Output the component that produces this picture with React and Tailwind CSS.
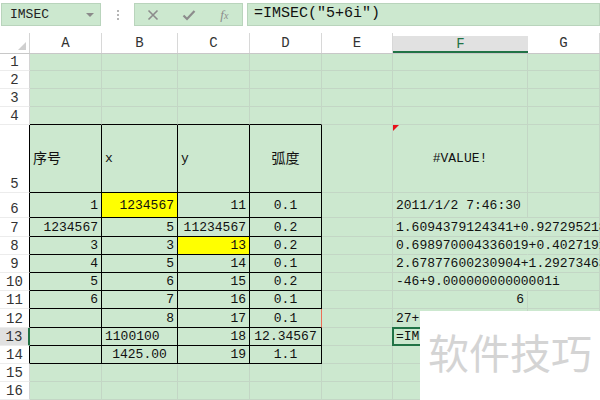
import React from "react";

const MONO = { fontFamily: '"Liberation Mono", "Noto Sans CJK SC", monospace' };

const cols = ["A", "B", "C", "D", "E", "F", "G"];
const widths = ["w-[72px]", "w-[76px]", "w-[72px]", "w-[72px]", "w-[71px]", "w-[135px]", "w-[72px]"];

const rowHeights = {
  1: "h-[17px]", 2: "h-[18px]", 3: "h-[18px]", 4: "h-[18px]", 5: "h-[68px]", 6: "h-[25px]",
  7: "h-[19px]", 8: "h-[18px]", 9: "h-[18px]", 10: "h-[18px]", 11: "h-[18px]", 12: "h-[19px]",
  13: "h-[18px]", 14: "h-[18px]", 15: "h-[18px]", 16: "h-[18px]",
};

// [text, align]
const data = {
  5: { A: ["序号", "l"], B: ["x", "l"], C: ["y", "l"], D: ["弧度", "c"], F: ["#VALUE!", "c"] },
  6: { A: ["1", "r"], B: ["1234567", "r"], C: ["11", "r"], D: ["0.1", "c"], F: ["2011/1/2 7:46:30", "l"] },
  7: { A: ["1234567", "r"], B: ["5", "r"], C: ["11234567", "r"], D: ["0.2", "c"], F: ["1.6094379124341+0.927295218001612i", "l"] },
  8: { A: ["3", "r"], B: ["3", "r"], C: ["13", "r"], D: ["0.2", "c"], F: ["0.698970004336019+0.402719196273373i", "l"] },
  9: { A: ["4", "r"], B: ["5", "r"], C: ["14", "r"], D: ["0.1", "c"], F: ["2.67877600230904+1.29273463659089i", "l"] },
  10: { A: ["5", "r"], B: ["6", "r"], C: ["15", "r"], D: ["0.2", "c"], F: ["-46+9.00000000000001i", "l"] },
  11: { A: ["6", "r"], B: ["7", "r"], C: ["16", "r"], D: ["0.1", "c"], F: ["6", "r"] },
  12: { B: ["8", "r"], C: ["17", "r"], D: ["0.1", "c"], F: ["27+", "l"] },
  13: { B: ["1100100", "l"], C: ["18", "r"], D: ["12.34567", "c"], F: ["=IM", "l"] },
  14: { B: ["1425.00", "c"], C: ["19", "r"], D: ["1.1", "c"] },
};

const yellow = { "6B": true, "8C": true };
const overflowRows = { 7: true, 8: true, 9: true, 10: true };

function Cell({ r, c, i }) {
  const d = data[r] && data[r][c];
  const inTable = r >= 5 && r <= 14 && i <= 3;
  const tableTopEdge = r === 4 && i <= 3;
  let border = "border-r border-b border-[#c3d6c5]";
  if (inTable) border = "border-r border-b border-black";
  else if (tableTopEdge) border = "border-r border-b border-r-[#c3d6c5] border-b-black";
  if (c === "F" && overflowRows[r]) border = "border-r border-b border-r-[#cce8cf] border-b-[#c3d6c5]";
  if (r === 12 && c === "D") border = "border-r border-b border-r-[#ec6e57] border-b-black";
  const bg = yellow[`${r}${c}`] ? "bg-[#ffff00]" : "bg-[#cce8cf]";
  const align = d ? (d[1] === "r" ? "justify-end pr-[3px]" : d[1] === "c" ? "justify-center" : "justify-start pl-[3px]") : "";
  const isCJK = d && /[\u4e00-\u9fff]/.test(d[0]);
  const selected = r === 13 && c === "F";
  return (
    <div className={`relative flex items-center ${widths[i]} shrink-0 ${border} ${bg} ${align} ${c === "F" && overflowRows[r] ? "z-10" : ""}`}>
      {d && (
        <span className={`whitespace-nowrap text-[#111] ${isCJK ? "text-[14px]" : "text-[13px]"} leading-none`} style={MONO}>
          {d[0]}
        </span>
      )}
      {r === 5 && c === "F" && (
        <div className="absolute left-0 top-0 w-0 h-0 border-t-[6px] border-t-[#e8101a] border-r-[6px] border-r-transparent" />
      )}
      {selected && <div className="absolute left-[-1px] top-[-1px] w-[136px] h-[19px] border-2 border-[#217346]" />}
    </div>
  );
}

function RowHeader({ r }) {
  const sel = r === 13;
  let br = "border-r border-[#d4d4d4]";
  if (r >= 5 && r <= 14) br = "border-r border-black";
  if (sel) br = "border-r-2 border-[#217346]";
  return (
    <div className={`w-[30px] shrink-0 flex items-end justify-center pb-[1px] ${sel ? "bg-[#e1e1e1]" : "bg-white"} ${br} border-b border-b-[#ececec]`}>
      <span className="text-[14px] leading-none text-[#333]" style={MONO}>{r}</span>
    </div>
  );
}

export default function App() {
  const rows = Array.from({ length: 16 }, (_, k) => k + 1);
  return (
    <div className="w-[600px] h-[400px] overflow-hidden bg-white relative" style={MONO}>
      {/* toolbar */}
      <div className="h-[33px] flex items-start pt-[3px] pl-[1px]">
        <div className="w-[100px] h-[23px] bg-[#cce8cf] border border-[#b9d4bc] flex items-center pl-[8px] relative">
          <span className="text-[13px] text-[#222]" style={MONO}>IMSEC</span>
          <div className="absolute right-[6px] top-[9px] w-0 h-0 border-l-[4px] border-r-[4px] border-t-[4px] border-l-transparent border-r-transparent border-t-[#8a8a8a]" />
        </div>
        <div className="w-[33px] h-[23px] flex flex-col items-center justify-center gap-[2px]">
          <div className="w-[2px] h-[2px] bg-[#b5b5b5]" />
          <div className="w-[2px] h-[2px] bg-[#b5b5b5]" />
          <div className="w-[2px] h-[2px] bg-[#b5b5b5]" />
        </div>
        <div className="w-[109px] h-[23px] bg-[#cce8cf] border border-[#b9d4bc] flex items-center">
          <div className="w-[37px] flex justify-center">
            <svg width="12" height="12" viewBox="0 0 12 12"><path d="M1.5 1.5 L10.5 10.5 M10.5 1.5 L1.5 10.5" stroke="#8c8c8c" strokeWidth="1.6" fill="none" /></svg>
          </div>
          <div className="w-[36px] flex justify-center">
            <svg width="14" height="12" viewBox="0 0 14 12"><path d="M1.5 6.5 L5 10 L12.5 2" stroke="#8c8c8c" strokeWidth="2.2" fill="none" /></svg>
          </div>
          <div className="w-[36px] flex justify-center">
            <span className="text-[13px] italic text-[#8c8c8c]" style={{ fontFamily: '"Liberation Serif", serif' }}>f<span className="text-[10px]">x</span></span>
          </div>
        </div>
        <div className="ml-[4px] flex-1 h-[23px] bg-[#cce8cf] border border-[#b9d4bc] flex items-center pl-[6px]">
          <span className="text-[15px] text-[#111] whitespace-nowrap" style={MONO}>=IMSEC(″5+6i″)</span>
        </div>
      </div>
      {/* column header */}
      <div className="h-[21px] flex border-b border-[#c8c8c8]">
        <div className="w-[30px] shrink-0 border-r border-[#d4d4d4] relative">
          <div className="absolute right-[3px] bottom-[3px] w-0 h-0 border-l-[8px] border-l-transparent border-b-[8px] border-b-[#cfcfcf]" />
        </div>
        {cols.map((c, i) => (
          <div key={c} className={`${widths[i]} shrink-0 flex items-end ${c === "F" ? "pt-[3px]" : "border-r border-[#d8d8d8]"}`}>
            <div className={`w-full h-full flex items-center justify-center ${c === "F" ? "bg-[#e1e1e1] border-b-2 border-[#217346]" : ""}`}>
              <span className={`text-[14px] leading-none ${c === "F" ? "text-[#217346]" : "text-[#333]"}`} style={MONO}>{c}</span>
            </div>
          </div>
        ))}
      </div>
      {/* grid */}
      {rows.map((r) => (
        <div key={r} className={`flex ${rowHeights[r]}`}>
          <RowHeader r={r} />
          {cols.map((c, i) => (
            <Cell key={c} r={r} c={c} i={i} />
          ))}
        </div>
      ))}
      {/* watermark */}
      <div className="absolute left-[420px] top-[311px] w-[180px] h-[89px] bg-white z-20 flex items-start pl-[8px] pt-[20px]">
        <span className="text-[41px] leading-none text-[#d4d4d4] whitespace-nowrap" style={{ fontFamily: '"Noto Sans CJK SC", sans-serif' }}>软件技巧</span>
      </div>
    </div>
  );
}
